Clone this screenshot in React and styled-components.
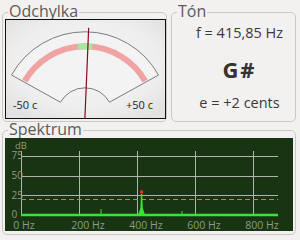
import React from 'react'
import styled, { createGlobalStyle } from 'styled-components'

const GlobalStyle = createGlobalStyle`
  body {
    margin: 0;
    background: #f2f1f0;
    font-family: "Open Sans", "DejaVu Sans", sans-serif;
  }
`

const Window = styled.div`
  width: 300px;
  height: 240px;
  box-sizing: border-box;
  padding: 4px 4px 0 2px;
  display: flex;
  flex-direction: column;
  overflow: hidden;
`

const TopRow = styled.div`
  display: grid;
  grid-template-columns: 165px 125px;
  column-gap: 4px;
  height: 118px;
`

const Group = styled.fieldset`
  margin: 0;
  padding: 0;
  min-width: 0;
  box-sizing: border-box;
  border: 1px solid #cac8c5;
  border-radius: 5px;
  height: ${p => p.$h || 'auto'};
`

const Legend = styled.legend`
  font-family: "Open Sans", sans-serif;
  font-size: 16px;
  line-height: 14px;
  padding: 0 1px 3px;
  margin-left: 5px;
  color: #5a5a5a;
`

const Canvas = styled.svg`
  display: block;
  margin: ${p => p.$mt || -2}px 0 0 2px;
`

const ToneBox = styled.div`
  display: flex;
  flex-direction: column;
  align-items: center;
  padding: 3px 0 0 12px;
  color: #3a3a3a;
`

const Line = styled.div`
  font-size: 14.5px;
  line-height: 18px;
  margin-top: ${p => p.$mt || 0}px;
  white-space: nowrap;
`

const Note = styled.div`
  font-size: 22px;
  line-height: 26px;
  font-weight: 700;
  letter-spacing: 2px;
  margin-top: 14px;
  color: #333;
`

function polar(cx, cy, r, deg) {
  const a = (deg * Math.PI) / 180
  return [cx + r * Math.sin(a), cy - r * Math.cos(a)]
}

function arc(cx, cy, r, from, to) {
  const [x1, y1] = polar(cx, cy, r, from)
  const [x2, y2] = polar(cx, cy, r, to)
  return `M ${x1} ${y1} A ${r} ${r} 0 0 1 ${x2} ${y2}`
}

function Gauge({ cents }) {
  const cx = 80
  const cy = 96.8
  const [o1x, o1y] = polar(cx, cy, 84, -61)
  const [o2x, o2y] = polar(cx, cy, 84, 61)
  const [i1x, i1y] = polar(cx, cy, 28, -61)
  const [i2x, i2y] = polar(cx, cy, 28, 61)
  const sector = `M ${o1x} ${o1y} A 84 84 0 0 1 ${o2x} ${o2y} L ${i2x} ${i2y} A 28 28 0 0 0 ${i1x} ${i1y} Z`
  const [nx, ny] = polar(cx, cy, 88, (cents / 50) * 60)
  const [bx, by] = polar(cx, cy, -3, (cents / 50) * 60)
  return (
    <Canvas width="161" height="100" viewBox="0 0 161 100">
      <defs>
        <radialGradient id="glow" cx="50%" cy="45%" r="65%">
          <stop offset="0%" stopColor="#f6f6f6" />
          <stop offset="70%" stopColor="#eeeeee" />
          <stop offset="100%" stopColor="#e2e2e2" />
        </radialGradient>
      </defs>
      <rect x="0.5" y="0.5" width="160" height="99" fill="url(#glow)" stroke="#111" />
      <path d={sector} fill="#f3f3f3" stroke="#7c7c7c" strokeWidth="1" />
      <path d={arc(cx, cy, 69.5, -60, 60)} fill="none" stroke="#f0a3a3" strokeWidth="6" />
      <path d={arc(cx, cy, 69.5, -6, 6)} fill="none" stroke="#a6e6a0" strokeWidth="6" />
      <line x1={bx} y1={by} x2={nx} y2={ny} stroke="#8a0a1e" strokeWidth="1.2" />
      <text x="8" y="89.5" fontSize="11" fill="#222" fontFamily="Open Sans, sans-serif">-50 c</text>
      <text x="148" y="89.5" fontSize="11" fill="#222" textAnchor="end" fontFamily="Open Sans, sans-serif">+50 c</text>
    </Canvas>
  )
}

const freqX = f => 16 + f * 0.29
const dbY = d => 77 - d * 0.79

function Spectrum() {
  const hz = [0, 200, 400, 600, 800]
  const db = [0, 25, 50, 75]
  const peak = freqX(415.85)
  const labelColor = '#8f9a89'
  return (
    <Canvas width="288" height="93" viewBox="0 0 288 93" $mt={-1}>
      <rect x="0" y="0" width="288" height="93" fill="#183412" />
      {hz.map(f => (
        <line key={f} x1={Math.round(freqX(f)) + 0.5} y1="13" x2={Math.round(freqX(f)) + 0.5} y2="77" stroke="#b1b3ae" />
      ))}
      {db.map(d => (
        <line key={d} x1="16" y1={Math.round(dbY(d)) + 0.5} x2="273" y2={Math.round(dbY(d)) + 0.5} stroke="#b1b3ae" />
      ))}
      <line x1="16" y1={Math.round(dbY(20)) + 0.5} x2="273" y2={Math.round(dbY(20)) + 0.5} stroke="#a39e2c" strokeDasharray="5 3" />
      <line x1="16" y1="77" x2="273" y2="77" stroke="#33e633" strokeWidth="2.5" />
      <line x1={freqX(276)} y1="77" x2={freqX(276)} y2="71" stroke="#33e633" strokeWidth="1" />
      <line x1={freqX(555)} y1="77" x2={freqX(555)} y2="73" stroke="#33e633" strokeWidth="1" />
      <polygon
        points={`${peak - 3.5},77 ${peak - 1.2},70 ${peak - 0.7},56 ${peak + 0.7},56 ${peak + 1.2},70 ${peak + 3.5},77`}
        fill="#33e633"
      />
      <rect x={peak - 1.5} y="52.5" width="3" height="3" fill="#e8332a" />
      <text x="10" y="11" fontSize="9.5" fill={labelColor} fontFamily="Open Sans, sans-serif">dB</text>
      {db.map(d => (
        <text key={d} x="6.5" y={dbY(d) + 3.4} fontSize="10" fill={labelColor} fontFamily="Open Sans, sans-serif">{d}</text>
      ))}
      {hz.map(f => (
        <text key={f} x={freqX(f) - 7.7} y="90.5" fontSize="10.5" fill={labelColor} fontFamily="Open Sans, sans-serif">{f} Hz</text>
      ))}
    </Canvas>
  )
}

export default function App() {
  return (
    <>
      <GlobalStyle />
      <Window>
        <TopRow>
          <Group>
            <Legend>Odchylka</Legend>
            <Gauge cents={2} />
          </Group>
          <Group>
            <Legend>Tón</Legend>
            <ToneBox>
              <Line>f = 415,85 Hz</Line>
              <Note>G#</Note>
              <Line $mt={12}>e = +2 cents</Line>
            </ToneBox>
          </Group>
        </TopRow>
        <Group $h="113px">
          <Legend>Spektrum</Legend>
          <Spectrum />
        </Group>
      </Window>
    </>
  )
}
